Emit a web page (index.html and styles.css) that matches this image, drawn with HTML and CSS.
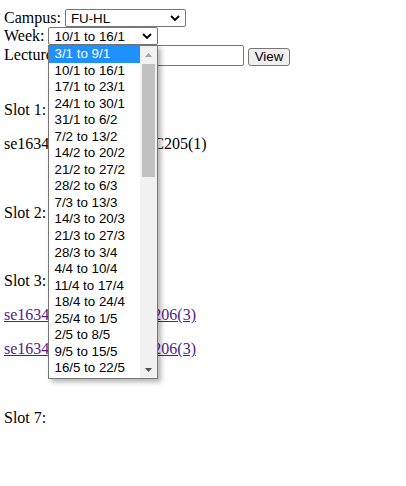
FILE: index.html
```html
<!DOCTYPE html>
<html lang="en">
<head>
<meta charset="utf-8">
<title>Schedule</title>
<link rel="stylesheet" href="styles.css">
</head>
<body>
<form class="filters">
  <div class="row">
    <label class="lbl lbl-campus" for="campus">Campus:</label>
    <select id="campus" class="sel sel-campus"><option>FU-HL</option></select>
  </div>
  <div class="row">
    <label class="lbl lbl-week" for="week">Week:</label>
    <div class="sel-wrap">
      <select id="week" class="sel sel-week"><option>10/1 to 16/1</option></select>
      <div class="popup" role="listbox">
        <div class="options">
          <div class="opt opt-active">3/1 to 9/1</div>
          <div class="opt">10/1 to 16/1</div>
          <div class="opt">17/1 to 23/1</div>
          <div class="opt">24/1 to 30/1</div>
          <div class="opt">31/1 to 6/2</div>
          <div class="opt">7/2 to 13/2</div>
          <div class="opt">14/2 to 20/2</div>
          <div class="opt">21/2 to 27/2</div>
          <div class="opt">28/2 to 6/3</div>
          <div class="opt">7/3 to 13/3</div>
          <div class="opt">14/3 to 20/3</div>
          <div class="opt">21/3 to 27/3</div>
          <div class="opt">28/3 to 3/4</div>
          <div class="opt">4/4 to 10/4</div>
          <div class="opt">11/4 to 17/4</div>
          <div class="opt">18/4 to 24/4</div>
          <div class="opt">25/4 to 1/5</div>
          <div class="opt">2/5 to 8/5</div>
          <div class="opt">9/5 to 15/5</div>
          <div class="opt">16/5 to 22/5</div>
        </div>
        <div class="scrollbar">
          <div class="sb-btn"><svg width="7" height="4" viewBox="0 0 7 4"><polygon points="0,4 3.5,0 7,4" fill="#a3a3a3"/></svg></div>
          <div class="sb-track"><div class="sb-thumb"></div></div>
          <div class="sb-btn"><svg width="7" height="4" viewBox="0 0 7 4"><polygon points="0,0 7,0 3.5,4" fill="#505050"/></svg></div>
        </div>
      </div>
    </div>
  </div>
  <div class="row row-lect">
    <label class="lbl lbl-lect" for="lect">Lecturer:</label>
    <input id="lect" class="txt" type="text">
    <button type="button" class="btn">View</button>
  </div>
</form>

<div class="slots">
  <div class="slot">
    <p>Slot 1:</p>
    <p>se1634 - SWP391 at F-C205(1)</p>
  </div>
  <div class="slot">
    <p>Slot 2:</p>
  </div>
  <div class="slot">
    <p>Slot 3:</p>
    <p><a href="#" class="lnk">se1634 - HCM202 at C206(3)</a></p>
    <p><a href="#" class="lnk">se1634 - HCM202 at C206(3)</a></p>
  </div>
  <div class="slot">
    <p>Slot 7:</p>
  </div>
</div>
</body>
</html>
```

FILE: styles.css
```css
html, body {
  background: #fff;
}
body {
  margin: 0;
  padding: 9px 4px 0;
  font-family: "Liberation Serif", "Times New Roman", serif;
  font-size: 16px;
  color: #000;
}
.filters {
  margin: 0;
}
.row {
  display: flex;
  align-items: baseline;
  height: 18px;
}
.row-lect {
  height: 22px;
}
.lbl {
  line-height: 14px;
}
.lbl-campus { margin-right: 4px; }
.lbl-week { margin-right: 4px; }
.lbl-lect { margin-right: 4px; }

.sel {
  -webkit-appearance: none;
  appearance: none;
  box-sizing: border-box;
  height: 18px;
  margin: 0;
  padding: 0 18px 0 5px;
  border: 1px solid #767676;
  border-radius: 2px;
  background: #fff url("data:image/svg+xml,%3Csvg xmlns='http://www.w3.org/2000/svg' width='10' height='6' viewBox='0 0 10 6'%3E%3Cpath d='M1 1 L5 5 L9 1' stroke='%23000' stroke-width='1.8' fill='none'/%3E%3C/svg%3E") no-repeat right 5px center;
  font-family: "Liberation Sans", Arial, sans-serif;
  font-size: 13.33px;
  color: #000;
}
.sel-campus { width: 121px; }
.sel-week { width: 110px; }

.sel-wrap {
  position: relative;
  display: flex;
}

.popup {
  position: absolute;
  left: 0;
  top: 18px;
  width: 110px;
  height: 334px;
  box-sizing: border-box;
  border: 1px solid #767676;
  background: #fff;
  box-shadow: 3px 3px 5px rgba(0, 0, 0, 0.3);
  display: flex;
  z-index: 10;
}
.options {
  flex: 1;
  overflow: hidden;
}
.opt {
  height: 16.55px;
  line-height: 16.55px;
  padding-left: 5px;
  font-family: "Liberation Sans", Arial, sans-serif;
  font-size: 13.33px;
  color: #000;
  white-space: nowrap;
}
.opt-active {
  background: #1e90ff;
  color: #fff;
}
.scrollbar {
  width: 17px;
  background: #f1f1f1;
  display: flex;
  flex-direction: column;
}
.sb-btn {
  height: 17px;
  display: flex;
  align-items: center;
  justify-content: center;
}
.sb-btn svg { display: block; }
.sb-track {
  flex: 1;
  padding: 1px 2px 0;
}
.sb-thumb {
  height: 113px;
  background: #c1c1c1;
}

.txt {
  box-sizing: border-box;
  width: 177px;
  height: 21px;
  margin: 0;
  padding: 1px 2px;
  border: 1px solid #767676;
  border-radius: 2px;
  font-family: "Liberation Sans", Arial, sans-serif;
  font-size: 13.33px;
}
.btn {
  align-self: flex-start;
  box-sizing: border-box;
  height: 18px;
  margin: 3px 0 0 4px;
  padding: 0 6px;
  border: 1px solid #767676;
  border-radius: 3px;
  background: #efefef;
  font-family: "Liberation Sans", Arial, sans-serif;
  font-size: 13.33px;
  line-height: 14px;
  color: #000;
}

.slots {
  margin-top: 34px;
  display: flex;
  flex-direction: column;
  gap: 50.5px;
}
.slot {
  display: flex;
  flex-direction: column;
  gap: 16px;
}
.slot p {
  margin: 0;
  line-height: 18px;
  white-space: nowrap;
}
.lnk {
  color: #551a8b;
}
```
